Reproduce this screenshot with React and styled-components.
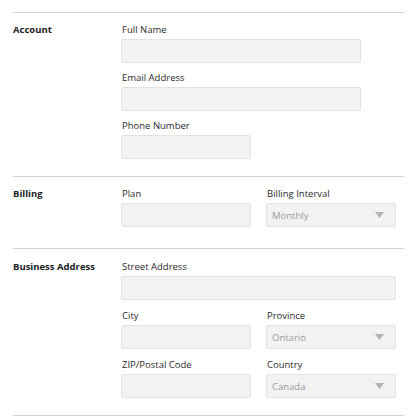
import React from 'react';
import styled, { createGlobalStyle } from 'styled-components';

const GlobalStyle = createGlobalStyle`
    body {
        margin: 0;
        background: #fff;
        font-family: 'Open Sans', 'Liberation Sans', sans-serif;
        color: #2b2b2b;
    }
`;

const Page = styled('div')`
    padding: 12px 12px 0 13px;
`;

const Section = styled('section')`
    display: grid;
    grid-template-columns: 108px 1fr;
    border-top: 1px solid #d4d4d4;
    padding: ${props => props.$top}px 0 ${props => props.$bottom}px;
    &:last-child {
        border-bottom: 1px solid #d4d4d4;
    }
`;

const SectionTitle = styled('div')`
    font-size: 9.5px;
    font-weight: 700;
    line-height: 14px;
    color: #222;
`;

const Fields = styled('div')`
    display: grid;
    grid-template-columns: 130px 130px;
    column-gap: 15px;
    row-gap: ${props => props.$gap}px;
    align-content: start;
`;

const Field = styled('label')`
    display: flex;
    flex-direction: column;
    gap: 2px;
    grid-column: ${props => props.$span ? '1 / span 2' : 'auto'};
    width: ${props => props.$width ? props.$width + 'px' : 'auto'};
`;

const Label = styled('span')`
    padding-left: 1px;
    font-size: 9.5px;
    line-height: 14px;
    color: #2b2b2b;
`;

const Input = styled('div')`
    box-sizing: border-box;
    height: 24px;
    background: #f2f2f2;
    border: 1px solid #e3e3e3;
    border-radius: 2px;
`;

const Select = styled(Input)`
    display: flex;
    align-items: center;
    justify-content: space-between;
    padding: 0 11px 0 5px;
    font-size: 9.5px;
    color: #9a9a9a;
`;

const Arrow = () => (
    <svg width='9' height='6' viewBox='0 0 9 6'>
        <path d='M0 0 L9 0 L4.5 6 Z' fill='#b3b3b3' />
    </svg>
);

const TextField = ({ label, span, width }) => (
    <Field $span={span} $width={width}>
        <Label>{label}</Label>
        <Input />
    </Field>
);

const SelectField = ({ label, value }) => (
    <Field>
        <Label>{label}</Label>
        <Select>
            <span>{value}</span>
            <Arrow />
        </Select>
    </Field>
);

export default function App () {
    return (
        <Page>
            <GlobalStyle />
            <Section $top={10} $bottom={17}>
                <SectionTitle>Account</SectionTitle>
                <Fields $gap={8}>
                    <TextField label='Full Name' span width={240} />
                    <TextField label='Email Address' span width={240} />
                    <TextField label='Phone Number' />
                </Fields>
            </Section>
            <Section $top={10} $bottom={21}>
                <SectionTitle>Billing</SectionTitle>
                <Fields $gap={8}>
                    <TextField label='Plan' />
                    <SelectField label='Billing Interval' value='Monthly' />
                </Fields>
            </Section>
            <Section $top={11} $bottom={17}>
                <SectionTitle>Business Address</SectionTitle>
                <Fields $gap={9}>
                    <TextField label='Street Address' span />
                    <TextField label='City' />
                    <SelectField label='Province' value='Ontario' />
                    <TextField label='ZIP/Postal Code' />
                    <SelectField label='Country' value='Canada' />
                </Fields>
            </Section>
        </Page>
    );
}
